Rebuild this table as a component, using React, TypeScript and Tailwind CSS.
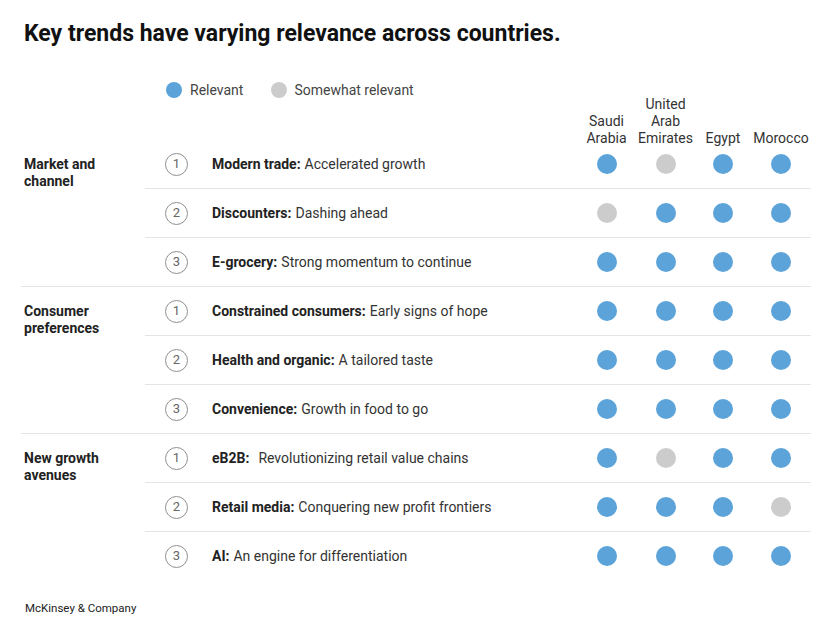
const BLUE = 'bg-[#5ba3d9]';
const GRAY = 'bg-[#cccccc]';

type Row = { bold: string; text: string; v: number[]; gap?: boolean };
type Group = { label: string[]; rows: Row[] };

const groups: Group[] = [
  {
    label: ['Market and', 'channel'],
    rows: [
      { bold: 'Modern trade:', text: 'Accelerated growth', v: [1, 0, 1, 1] },
      { bold: 'Discounters:', text: 'Dashing ahead', v: [0, 1, 1, 1] },
      { bold: 'E-grocery:', text: 'Strong momentum to continue', v: [1, 1, 1, 1] },
    ],
  },
  {
    label: ['Consumer', 'preferences'],
    rows: [
      { bold: 'Constrained consumers:', text: 'Early signs of hope', v: [1, 1, 1, 1] },
      { bold: 'Health and organic:', text: 'A tailored taste', v: [1, 1, 1, 1] },
      { bold: 'Convenience:', text: 'Growth in food to go', v: [1, 1, 1, 1] },
    ],
  },
  {
    label: ['New growth', 'avenues'],
    rows: [
      { bold: 'eB2B:', text: 'Revolutionizing retail value chains', v: [1, 0, 1, 1], gap: true },
      { bold: 'Retail media:', text: 'Conquering new profit frontiers', v: [1, 1, 1, 0] },
      { bold: 'AI:', text: 'An engine for differentiation', v: [1, 1, 1, 1] },
    ],
  },
];

// column widths so dot centres land where the chart has them
const colW = ['w-[59px]', 'w-[59px]', 'w-[56px]', 'w-[60px]'];
const headers = [['Saudi', 'Arabia'], ['United', 'Arab', 'Emirates'], ['Egypt'], ['Morocco']];

function Dot({ on }: { on: number }) {
  return <div className={`w-[20px] h-[20px] rounded-full ${on ? BLUE : GRAY}`} />;
}

export default function App() {
  return (
    <div className="w-[832px] h-[628px] bg-white px-[21px] font-['Roboto','Liberation_Sans',sans-serif] text-[#333]">
      {/* Title */}
      <h1 className="pt-[20px] pl-[3px] text-[23px] leading-[28px] font-bold text-[#111]">
        Key trends have varying relevance across countries.
      </h1>

      {/* Legend */}
      <div className="mt-[32px] ml-[145px] flex items-center h-[20px] text-[14px] text-[#444]">
        <div className={`w-[16px] h-[16px] rounded-full ${BLUE}`} />
        <span className="ml-[8px]">Relevant</span>
        <div className={`ml-[28px] w-[16px] h-[16px] rounded-full ${GRAY}`} />
        <span className="ml-[7px]">Somewhat relevant</span>
      </div>

      {/* Column headers */}
      <div className="flex -mt-[4px] -mb-[7px]">
        <div className="w-[556px]" />
        {headers.map((h, i) => (
          <div key={i} className={`${colW[i]} flex flex-col justify-end items-center h-[51px] text-[14px] leading-[17px] text-[#333]`}>
            {h.map((line) => (
              <span key={line} className="whitespace-nowrap">{line}</span>
            ))}
          </div>
        ))}
      </div>

      {/* Table */}
      {groups.map((g, gi) => (
        <div key={gi} className={`flex ${gi < groups.length - 1 ? 'border-b border-[#e4e4e4]' : ''}`}>
          <div className="w-[124px] pl-[3px] pt-[16px] text-[14px] leading-[17px] font-bold text-[#222]">
            {g.label.map((l) => (
              <div key={l}>{l}</div>
            ))}
          </div>
          <div className="flex-1">
            {g.rows.map((r, ri) => (
              <div
                key={ri}
                className={`flex items-center h-[48px] ${ri < g.rows.length - 1 ? 'border-b border-[#e4e4e4] h-[49px]' : ''}`}
              >
                <div className="ml-[20px] w-[23px] h-[23px] rounded-full border border-[#8f8f8f] flex items-center justify-center text-[13px] text-[#666]">
                  {ri + 1}
                </div>
                <div className="ml-[24px] flex-1 text-[14px] whitespace-nowrap">
                  <span className="font-bold text-[#222]">{r.bold}</span>
                  <span className={r.gap ? 'ml-[9px]' : 'ml-[4px]'}>{r.text}</span>
                </div>
                <div className="flex">
                  {r.v.map((on, i) => (
                    <div key={i} className={`${colW[i]} flex justify-center`}>
                      <Dot on={on} />
                    </div>
                  ))}
                </div>
              </div>
            ))}
          </div>
        </div>
      ))}

      {/* Footer */}
      <div className="mt-[20px] pl-[4px] text-[11.5px] leading-[16px] text-[#222]">McKinsey &amp; Company</div>
    </div>
  );
}
